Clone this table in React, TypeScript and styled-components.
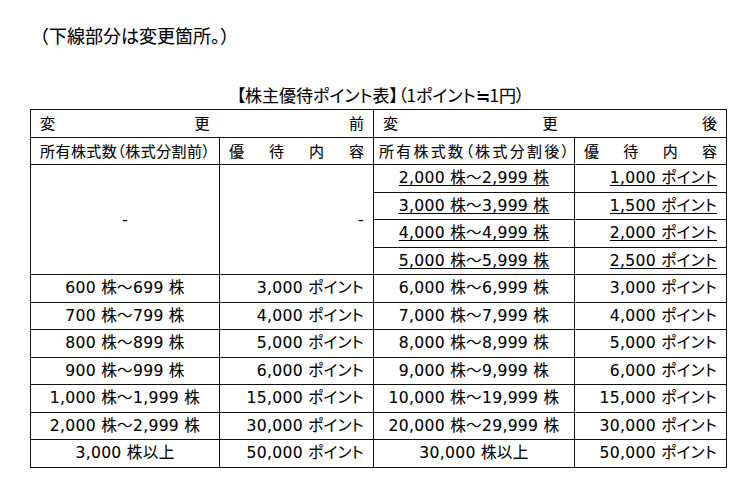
import React from 'react';
import styled, { createGlobalStyle } from 'styled-components';

const GlobalStyle = createGlobalStyle`
  html, body {
    margin: 0;
    padding: 0;
    background: #ffffff;
  }
  body {
    font-family: "DejaVu Sans", "Noto Sans CJK JP", sans-serif;
    color: #000000;
  }
`;

const Page = styled.div`
  width: 746px;
  height: 480px;
  padding-top: 23px;
  box-sizing: border-box;
`;

const Note = styled.div`
  padding-left: 31px;
  font-family: "Noto Sans CJK JP", sans-serif;
  font-size: 18px;
  line-height: 24px;
  -webkit-text-stroke: 0.1px #000;
`;

const Table = styled.table`
  margin: 36px 0 0 30px;
  width: 697px;
  border-collapse: collapse;
  table-layout: fixed;
  font-family: "DejaVu Sans", "Noto Sans CJK JP", sans-serif;
  font-size: 15.6px;
  color: #000000;
  font-feature-settings: "palt";
  -webkit-text-stroke: 0.1px #000;
`;

const Caption = styled.caption`
  font-family: "Noto Sans CJK JP", sans-serif;
  font-size: 17px;
  line-height: 24px;
  padding-bottom: 2px;
  padding-left: 4px;
  text-align: center;
`;

const Row = styled.tr`
  height: 27.5px;
`;

const Cell = styled.td<{ $align?: 'left' | 'center' | 'right'; $underline?: boolean }>`
  border: 1px solid #111111;
  padding: 0 9px;
  text-align: ${(p) => p.$align ?? 'center'};
  vertical-align: middle;
  white-space: nowrap;
  line-height: 20px;
  letter-spacing: 0.3px;
  text-decoration: ${(p) => (p.$underline ? 'underline' : 'none')};
  text-decoration-thickness: 1px;
  text-underline-offset: 2px;
`;

const HeadCell = styled.td<{ $pad?: number }>`
  border: 1px solid #111111;
  padding: 0 ${(p) => p.$pad ?? 8}px;
  vertical-align: middle;
  line-height: 20px;
  font-family: "Noto Sans CJK JP", sans-serif;
  font-size: 15px;
`;

const Spread = styled.div`
  display: flex;
  justify-content: space-between;
`;

function Spaced({ text }: { text: string }) {
  return (
    <Spread>
      {Array.from(text).map((ch, i) => (
        <span key={i}>{ch}</span>
      ))}
    </Spread>
  );
}

type Line = { from: string; to?: string; pts: string };

const before: Line[] = [
  { from: '600', to: '699', pts: '3,000' },
  { from: '700', to: '799', pts: '4,000' },
  { from: '800', to: '899', pts: '5,000' },
  { from: '900', to: '999', pts: '6,000' },
  { from: '1,000', to: '1,999', pts: '15,000' },
  { from: '2,000', to: '2,999', pts: '30,000' },
  { from: '3,000', pts: '50,000' },
];

const added: Line[] = [
  { from: '2,000', to: '2,999', pts: '1,000' },
  { from: '3,000', to: '3,999', pts: '1,500' },
  { from: '4,000', to: '4,999', pts: '2,000' },
  { from: '5,000', to: '5,999', pts: '2,500' },
];

const after: Line[] = [
  { from: '6,000', to: '6,999', pts: '3,000' },
  { from: '7,000', to: '7,999', pts: '4,000' },
  { from: '8,000', to: '8,999', pts: '5,000' },
  { from: '9,000', to: '9,999', pts: '6,000' },
  { from: '10,000', to: '19,999', pts: '15,000' },
  { from: '20,000', to: '29,999', pts: '30,000' },
  { from: '30,000', pts: '50,000' },
];

const shares = (l: Line) => (l.to ? `${l.from} 株～${l.to} 株` : `${l.from} 株以上`);
const points = (l: Line) => `${l.pts} ポイント`;

export default function App() {
  return (
    <Page>
      <GlobalStyle />
      <Note>（下線部分は変更箇所。）</Note>
      <Table>
        <Caption>【株主優待ポイント表】（1ポイント≒1円）</Caption>
        <colgroup>
          <col style={{ width: 189 }} />
          <col style={{ width: 154 }} />
          <col style={{ width: 201 }} />
          <col style={{ width: 152 }} />
        </colgroup>
        <tbody>
          <Row>
            <HeadCell colSpan={2} $pad={9}>
              <Spaced text="変更前" />
            </HeadCell>
            <HeadCell colSpan={2} $pad={9}>
              <Spaced text="変更後" />
            </HeadCell>
          </Row>
          <Row>
            <HeadCell $pad={9}>
              <Spaced text="所有株式数（株式分割前）" />
            </HeadCell>
            <HeadCell $pad={9}>
              <Spaced text="優待内容" />
            </HeadCell>
            <HeadCell $pad={5}>
              <Spaced text="所有株式数（株式分割後）" />
            </HeadCell>
            <HeadCell $pad={9}>
              <Spaced text="優待内容" />
            </HeadCell>
          </Row>
          {added.map((l, i) => (
            <Row key={`n${i}`}>
              {i === 0 && (
                <>
                  <Cell rowSpan={added.length}>-</Cell>
                  <Cell rowSpan={added.length} $align="right">
                    -
                  </Cell>
                </>
              )}
              <Cell $underline>{shares(l)}</Cell>
              <Cell $align="right" $underline>
                {points(l)}
              </Cell>
            </Row>
          ))}
          {before.map((b, i) => (
            <Row key={`r${i}`}>
              <Cell>{shares(b)}</Cell>
              <Cell $align="right">{points(b)}</Cell>
              <Cell>{shares(after[i])}</Cell>
              <Cell $align="right">{points(after[i])}</Cell>
            </Row>
          ))}
        </tbody>
      </Table>
    </Page>
  );
}
